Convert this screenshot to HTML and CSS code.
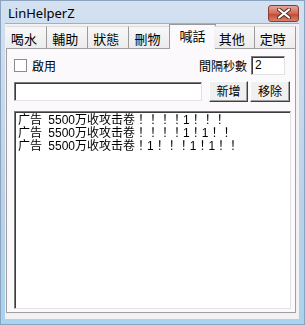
FILE: index.html
```html
<!DOCTYPE html>
<html lang="zh-Hant">
<head>
    <meta charset="UTF-8">
    <title>LinHelperZ</title>
    <link rel="stylesheet" href="styles.css">
</head>
<body>
    <div class="window">
        <div class="titlebar">
            <span class="title">LinHelperZ</span>
            <div class="close">
                <svg width="14" height="11" viewBox="0 0 14 11">
                    <path d="M2 1.5 L12 9.5 M12 1.5 L2 9.5" stroke="#5a2a22" stroke-width="4" stroke-linecap="round"/>
                    <path d="M2 1.5 L12 9.5 M12 1.5 L2 9.5" stroke="#ffffff" stroke-width="2.2" stroke-linecap="round"/>
                </svg>
            </div>
        </div>
        <div class="client">
            <div class="tabs">
                <div class="tab">喝水</div>
                <div class="tab">輔助</div>
                <div class="tab">狀態</div>
                <div class="tab">刪物</div>
                <div class="tab active">喊話</div>
                <div class="tab">其他</div>
                <div class="tab">定時</div>
            </div>
            <div class="panel">
                <div class="row top-row">
                    <div class="check"><span class="box"></span>啟用</div>
                    <div class="interval">
                        <span>間隔秒數</span>
                        <div class="field seconds">2</div>
                    </div>
                </div>
                <div class="row add-row">
                    <div class="field message"></div>
                    <div class="btn first">新增</div>
                    <div class="btn">移除</div>
                </div>
                <div class="list">
                    <div class="item">广告 <span class="num">5500</span>万收攻击卷！！！！1！！！</div>
                    <div class="item">广告 <span class="num">5500</span>万收攻击卷！！！！1！1！！</div>
                    <div class="item">广告 <span class="num">5500</span>万收攻击卷！1！！！1！1！！</div>
                </div>
            </div>
        </div>
    </div>
</body>
</html>
```

FILE: styles.css
```css
body {
    margin: 0;
    padding: 0;
    background: #ffffff;
    font-family: "Noto Sans CJK TC", sans-serif;
    font-size: 12px;
    color: #000;
}
.window {
    width: 305px;
    height: 325px;
    box-sizing: border-box;
    background: linear-gradient(#d3e1f1, #bdd1e8 60%, #a9d3ee);
    padding: 0 5px 5px 4px;
    display: flex;
    flex-direction: column;
    border: 1px solid #8aa3bf;
}
.titlebar {
    height: 22px;
    flex: none;
    display: flex;
    align-items: center;
    justify-content: space-between;
}
.title {
    font-family: "Noto Sans", sans-serif;
    font-size: 13px;
    padding-left: 3px;
    padding-top: 1px;
}
.close {
    width: 29px;
    height: 15px;
    margin-top: 3px;
    border: 1px solid #8c3b30;
    border-radius: 3px;
    background: linear-gradient(#e4a597, #cf6a58 50%, #c0462f 51%, #d9816c);
    display: flex;
    align-items: center;
    justify-content: center;
}
.client {
    flex: 1;
    background: #f4f1f4;
    border-top: 1px solid #9cb0c6;
    padding: 2px 3px 6px 1px;
    display: flex;
    flex-direction: column;
}
.tabs {
    display: flex;
    height: 22px;
    position: relative;
    z-index: 1;
}
.tab {
    flex: 1;
    box-sizing: border-box;
    font-size: 13px;
    line-height: 20px;
    padding: 2px 0 0 5px;
    border-right: 1px solid #9a9a9a;
    border-top: 1px solid #dcdcdc;
    background: linear-gradient(#f7f7f7, #ececec);
}
.tab.active {
    margin: -2px -2px -1px -2px;
    padding: 1px 0 0 10px;
    border: 1px solid #9a9a9a;
    border-bottom: none;
    background: #fbf9fb;
}
.panel {
    flex: 1;
    background: #fbf9fb;
    border: 1px solid #a0a0a0;
    padding: 7px 4px 3px 7px;
    display: flex;
    flex-direction: column;
}
.row {
    display: flex;
    align-items: center;
}
.top-row {
    height: 19px;
    justify-content: space-between;
    padding-right: 6px;
}
.check {
    display: flex;
    align-items: center;
    gap: 5px;
    line-height: 14px;
}
.box {
    width: 11px;
    height: 11px;
    border: 1px solid #8c8c8c;
    background: #fff;
}
.interval {
    display: flex;
    align-items: center;
    gap: 4px;
}
.field {
    box-sizing: border-box;
    height: 19px;
    background: #fff;
    border: 1px solid;
    border-color: #7a7a7a #e2e2e2 #e2e2e2 #7a7a7a;
    box-shadow: inset 1px 1px 0 #3c3c3c;
    font-family: "Liberation Sans", sans-serif;
    font-size: 12px;
    line-height: 16px;
    padding-left: 3px;
}
.seconds {
    width: 34px;
}
.add-row {
    margin-top: 6px;
    height: 21px;
}
.message {
    width: 188px;
    margin-right: 7px;
}
.btn {
    box-sizing: border-box;
    width: 40px;
    height: 21px;
    background: #f0f0f0;
    border: 1px solid;
    border-color: #ffffff #404040 #404040 #ffffff;
    box-shadow: inset -1px -1px 0 #a0a0a0;
    text-align: center;
    line-height: 18px;
}
.btn.first {
    width: 39px;
    margin-right: 2px;
}
.list {
    flex: 1;
    margin-top: 9px;
    background: #fff;
    border: 1px solid;
    border-color: #7a7a7a #e2e2e2 #e2e2e2 #7a7a7a;
    box-shadow: inset 1px 1px 0 #3c3c3c;
    padding: 2px 0 0 3px;
    font-family: "Liberation Sans", "Noto Sans CJK SC", sans-serif;
    font-size: 12px;
    /* thin glyphs get colour fringes otherwise */
    filter: grayscale(100%);
}
.item {
    line-height: 13px;
    height: 13px;
    white-space: nowrap;
}
.num {
    margin-left: 3px;
}
```
